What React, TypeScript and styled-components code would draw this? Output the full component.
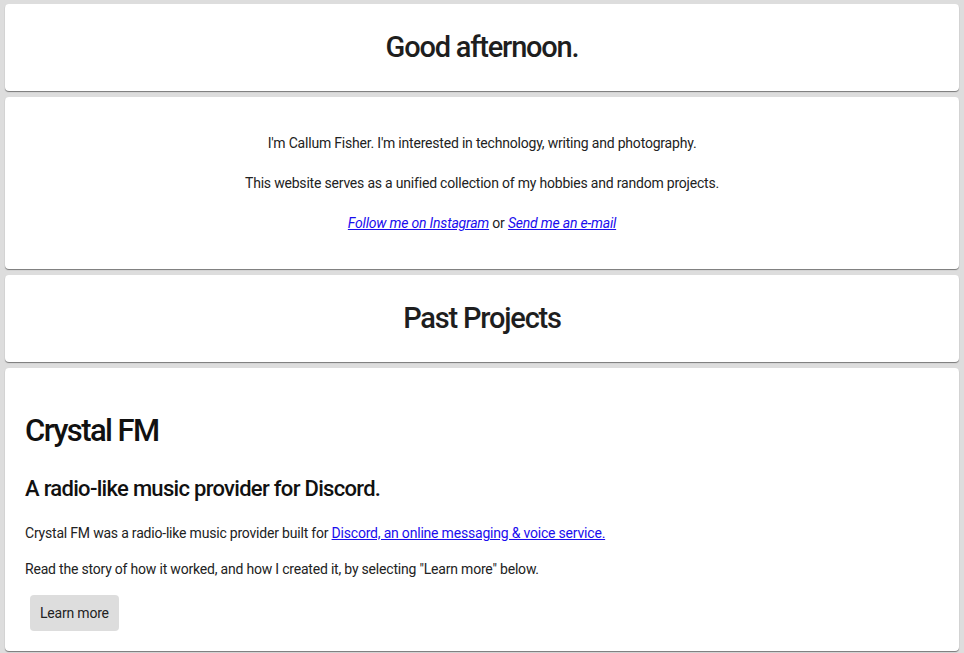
import styled, { createGlobalStyle } from "styled-components";

const GlobalStyle = createGlobalStyle`
  html, body {
    margin: 0;
    padding: 0;
    background: #dddddd;
  }
  body {
    font-family: Roboto, "Liberation Sans", sans-serif;
    color: #222;
  }
`;

const Page = styled.div`
  display: flex;
  flex-direction: column;
  gap: 6px;
  padding: 4px 5px;
`;

// cards have a 1px shadow on the bottom edge only
const Card = styled.section<{ $align?: "center" | "left" }>`
  background: #fff;
  border-radius: 4px;
  box-shadow: 0 1px 1px #777;
  text-align: ${(p) => p.$align ?? "center"};
  padding: ${(p) => (p.$align === "left" ? "41px 20px 20px" : "0 20px")};
`;

const SectionTitle = styled.h2`
  margin: 0;
  font-size: 29px;
  font-weight: 500;
  letter-spacing: -1.2px;
  line-height: 87px;
  color: #1e1e1e;
`;

const Intro = styled.div`
  padding: 36px 0 36px;
`;

const Para = styled.p<{ $gap?: number }>`
  margin: 0 0 ${(p) => p.$gap ?? 16}px;
  font-size: 14px;
  letter-spacing: -0.2px;
  line-height: 20px;
  &:last-child {
    margin-bottom: 0;
  }
`;

const Link = styled.a<{ $italic?: boolean }>`
  color: #1a0dee;
  font-style: ${(p) => (p.$italic ? "italic" : "normal")};
`;

const ProjectName = styled.h1`
  margin: 0 0 22px;
  font-size: 31px;
  font-weight: 500;
  letter-spacing: -1.6px;
  line-height: 44px;
  color: #111;
`;

const Tagline = styled.h3`
  margin: 0 0 20px;
  font-size: 22px;
  font-weight: 500;
  letter-spacing: -0.7px;
  line-height: 28px;
  color: #111;
`;

const Button = styled.button`
  margin: 0 0 0 5px;
  padding: 0 10px;
  height: 36px;
  border: none;
  border-radius: 4px;
  background: #dddddd;
  color: #222;
  font-family: inherit;
  font-size: 14px;
  letter-spacing: -0.2px;
`;

export default function App() {
  return (
    <>
      <GlobalStyle />
      <Page>
        <Card>
          <SectionTitle>Good afternoon.</SectionTitle>
        </Card>
        <Card>
          <Intro>
            <Para $gap={20}>I'm Callum Fisher. I'm interested in technology, writing and photography.</Para>
            <Para $gap={20}>This website serves as a unified collection of my hobbies and random projects.</Para>
            <Para $gap={20}>
              <Link $italic href="#">Follow me on Instagram</Link> or{" "}
              <Link $italic href="#">Send me an e-mail</Link>
            </Para>
          </Intro>
        </Card>
        <Card>
          <SectionTitle>Past Projects</SectionTitle>
        </Card>
        <Card $align="left">
          <ProjectName>Crystal FM</ProjectName>
          <Tagline>A radio-like music provider for Discord.</Tagline>
          <Para>
            Crystal FM was a radio-like music provider built for{" "}
            <Link href="#">Discord, an online messaging &amp; voice service.</Link>
          </Para>
          <Para>Read the story of how it worked, and how I created it, by selecting "Learn more" below.</Para>
          <Button>Learn more</Button>
        </Card>
      </Page>
    </>
  );
}
